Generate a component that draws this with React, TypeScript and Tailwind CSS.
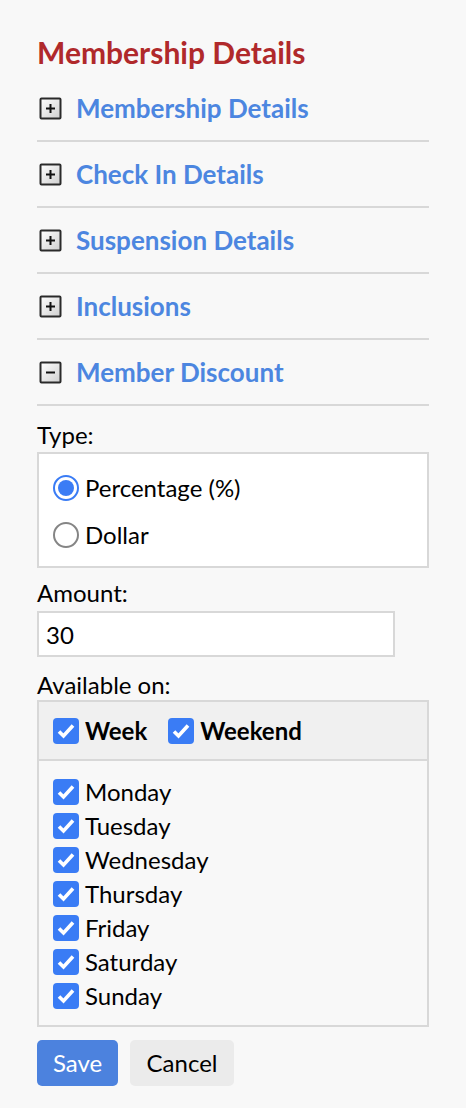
import { useState } from "react";

const sections = ["Membership Details", "Check In Details", "Suspension Details", "Inclusions"];
const days = ["Monday", "Tuesday", "Wednesday", "Thursday", "Friday", "Saturday", "Sunday"];

function ToggleIcon({ open }: { open: boolean }) {
  const id = open ? "gm" : "gp";
  return (
    <svg width="23" height="23" viewBox="0 0 23 23" className="shrink-0">
      <defs>
        <linearGradient id={id} x1="0" y1="0" x2="1" y2="1">
          <stop offset="0" stopColor="#ffffff" />
          <stop offset="1" stopColor="#cfcfcf" />
        </linearGradient>
      </defs>
      <rect x="1.5" y="1.5" width="20" height="20" rx="1" fill={`url(#${id})`} stroke="#2a2a2a" strokeWidth="2" />
      <path d="M7 11.5h9" stroke="#111" strokeWidth="2" />
      {!open && <path d="M11.5 7v9" stroke="#111" strokeWidth="2" />}
    </svg>
  );
}

function Check({ checked }: { checked: boolean }) {
  return (
    <span
      className={`flex h-[26px] w-[26px] shrink-0 items-center justify-center rounded-[4px] ${
        checked ? "bg-[#3a7cf5]" : "border-2 border-[#767676] bg-white"
      }`}
    >
      {checked && (
        <svg width="26" height="26" viewBox="0 0 26 26">
          <path d="M6 13.5l4.5 4.5 9.5-10.5" fill="none" stroke="#fff" strokeWidth="3.6" />
        </svg>
      )}
    </span>
  );
}

function Radio({ checked }: { checked: boolean }) {
  return checked ? (
    <span className="flex h-[26px] w-[26px] shrink-0 items-center justify-center rounded-full border-2 border-[#3a7cf5] bg-white">
      <span className="h-[16px] w-[16px] rounded-full bg-[#3a7cf5]" />
    </span>
  ) : (
    <span className="h-[26px] w-[26px] shrink-0 rounded-full border-2 border-[#858585] bg-white" />
  );
}

export default function App() {
  const [type, setType] = useState<"pct" | "dollar">("pct");
  const [checked, setChecked] = useState<Record<string, boolean>>(
    Object.fromEntries(days.map((d) => [d, true]))
  );
  const allWeek = days.slice(0, 5).every((d) => checked[d]);
  const allWeekend = days.slice(5).every((d) => checked[d]);

  const setGroup = (list: string[], v: boolean) =>
    setChecked((c) => ({ ...c, ...Object.fromEntries(list.map((d) => [d, v])) }));

  return (
    <div className="min-h-[1108px] bg-[#f8f8f8] px-[37px] pt-[34px] pb-6 font-['Lato',sans-serif] text-[24px] text-black">
      <h1 className="mb-[6px] text-[30px] font-bold leading-[36px] text-[#b0292b]">Membership Details</h1>

      {sections.map((s) => (
        <div key={s} className="flex h-[66px] items-center gap-[14px] border-b-2 border-[#d8d8d8] pl-[2px]">
          <ToggleIcon open={false} />
          <span className="text-[26px] font-bold text-[#4c86e0]">{s}</span>
        </div>
      ))}
      <div className="flex h-[66px] items-center gap-[14px] border-b-2 border-[#d8d8d8] pl-[2px]">
        <ToggleIcon open />
        <span className="text-[26px] font-bold text-[#4c86e0]">Member Discount</span>
      </div>

      <div className="mt-[15px] leading-[28px]">Type:</div>
      <div className="mt-[3px] border-2 border-[#d8d8d8] bg-white px-[14px] pt-[10px] pb-[8px]">
        <label className="flex h-[47px] cursor-pointer items-center gap-[6px]" onClick={() => setType("pct")}>
          <Radio checked={type === "pct"} />
          <span>Percentage (%)</span>
        </label>
        <label className="flex h-[47px] cursor-pointer items-center gap-[6px]" onClick={() => setType("dollar")}>
          <Radio checked={type === "dollar"} />
          <span>Dollar</span>
        </label>
      </div>

      <div className="mt-[11px] leading-[28px]">Amount:</div>
      <input
        defaultValue="30"
        className="mt-[4px] block h-[46px] w-[358px] border-2 border-[#d8d8d8] bg-white px-[7px] text-[24px] outline-none"
      />

      <div className="mt-[14px] leading-[28px]">Available on:</div>
      <div className="mt-[1px] border-2 border-[#d8d8d8]">
        <div className="flex h-[59px] items-center gap-[21px] border-b-2 border-[#d8d8d8] bg-[#f0f0f0] px-[14px]">
          <label className="flex cursor-pointer items-center gap-[6px]" onClick={() => setGroup(days.slice(0, 5), !allWeek)}>
            <Check checked={allWeek} />
            <span className="font-bold">Week</span>
          </label>
          <label className="flex cursor-pointer items-center gap-[6px]" onClick={() => setGroup(days.slice(5), !allWeekend)}>
            <Check checked={allWeekend} />
            <span className="font-bold">Weekend</span>
          </label>
        </div>
        <div className="px-[14px] pt-[14px] pb-[12px]">
          {days.map((d) => (
            <label
              key={d}
              className="flex h-[34px] cursor-pointer items-center gap-[6px]"
              onClick={() => setChecked((c) => ({ ...c, [d]: !c[d] }))}
            >
              <Check checked={checked[d]} />
              <span>{d}</span>
            </label>
          ))}
        </div>
      </div>

      <div className="mt-[13px] flex gap-[12px]">
        <button className="h-[46px] w-[81px] rounded-[5px] bg-[#4c82de] text-[24px] text-white">Save</button>
        <button className="h-[46px] w-[104px] rounded-[5px] bg-[#ebebeb] text-[24px] text-black">Cancel</button>
      </div>
    </div>
  );
}
